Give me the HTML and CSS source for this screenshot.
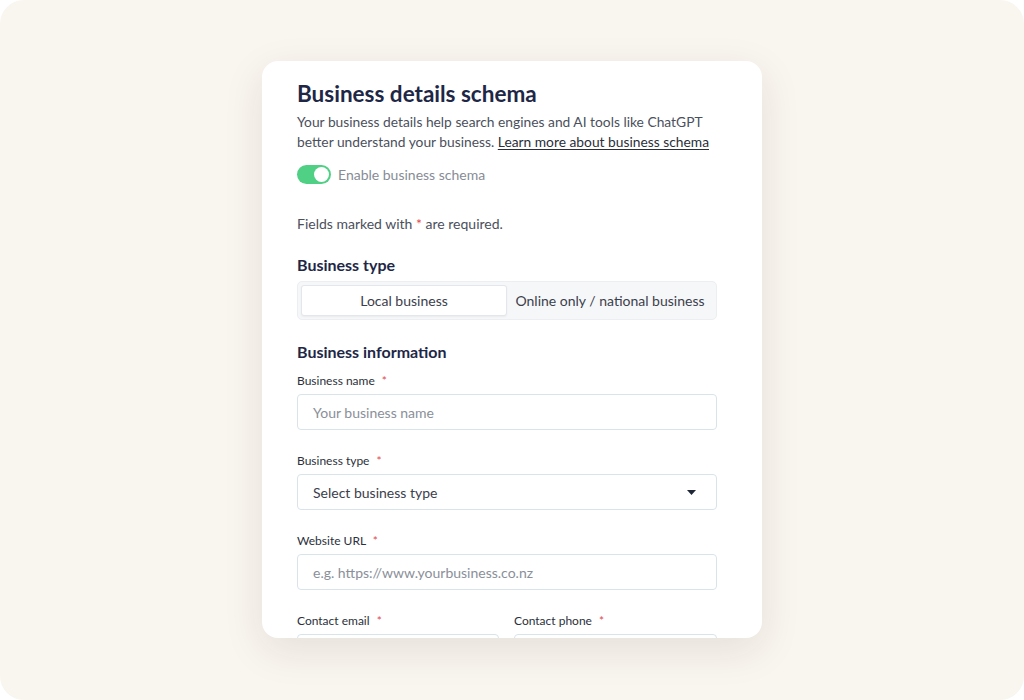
FILE: index.html
```html
<!DOCTYPE html>
<html lang="en">
<head>
<meta charset="utf-8">
<title>Business details schema</title>
<link rel="stylesheet" href="styles.css">
</head>
<body>
<div class="stage">
  <div class="card">
    <h1 class="title">Business details schema</h1>
    <p class="desc">Your business details help search engines and AI tools like ChatGPT better understand your business. <a href="#" class="link">Learn more about business schema</a></p>
    <label class="toggle-row">
      <span class="toggle"><span class="knob"></span></span>
      <span class="toggle-label">Enable business schema</span>
    </label>
    <p class="note">Fields marked with <span class="req">*</span> are required.</p>

    <h2 class="section">Business type</h2>
    <div class="segmented">
      <button class="seg active">Local business</button>
      <button class="seg">Online only / national business</button>
    </div>

    <h2 class="section section-info">Business information</h2>
    <div class="field">
      <div class="label">Business name <span class="req">*</span></div>
      <div class="input placeholder">Your business name</div>
    </div>
    <div class="field">
      <div class="label">Business type <span class="req">*</span></div>
      <div class="input select"><span>Select business type</span>
        <svg class="caret" width="9" height="5" viewBox="0 0 9 5"><path d="M0 0H9L4.5 5Z" fill="#1f2638"/></svg>
      </div>
    </div>
    <div class="field">
      <div class="label">Website URL <span class="req">*</span></div>
      <div class="input placeholder">e.g. https://www.yourbusiness.co.nz</div>
    </div>
    <div class="row">
      <div class="field">
        <div class="label">Contact email <span class="req">*</span></div>
        <div class="input"></div>
      </div>
      <div class="field">
        <div class="label">Contact phone <span class="req">*</span></div>
        <div class="input"></div>
      </div>
    </div>
  </div>
</div>
</body>
</html>
```

FILE: styles.css
```css
html, body {
  margin: 0;
  padding: 0;
  background: #ffffff;
}
body {
  font-family: Lato, "Noto Sans", sans-serif;
  color: #1f2740;
}
.stage {
  width: 1024px;
  height: 700px;
  background: #f9f5ef;
  border-radius: 24px;
  box-sizing: border-box;
  padding-top: 61px;
  display: flex;
  justify-content: center;
  align-items: flex-start;
  overflow: hidden;
}
.card {
  width: 500px;
  height: 577px;
  box-sizing: border-box;
  background: #ffffff;
  border-radius: 16px;
  box-shadow: 0 12px 40px rgba(60, 45, 30, 0.10);
  padding: 19px 45px 0 35px;
  overflow: hidden;
}
.title {
  margin: 0;
  font-size: 22.5px;
  line-height: 28px;
  font-weight: 700;
  color: #1e2746;
}
.desc {
  margin: 4px 0 0;
  font-size: 13.8px;
  line-height: 19.5px;
  color: #4b505c;
}
.link {
  color: #2a2f3a;
  text-decoration: underline;
  text-underline-offset: 2px;
}
.toggle-row {
  display: flex;
  align-items: center;
  gap: 7px;
  margin-top: 14px;
}
.toggle {
  width: 34px;
  height: 19px;
  border-radius: 10px;
  background: #4fd085;
  position: relative;
  display: inline-block;
}
.knob {
  position: absolute;
  right: 2px;
  top: 2px;
  width: 15px;
  height: 15px;
  border-radius: 50%;
  background: #ffffff;
}
.toggle-label {
  font-size: 14px;
  color: #878c96;
}
.note {
  margin: 30px 0 0;
  font-size: 14px;
  line-height: 20px;
  color: #4b505c;
}
.req {
  color: #e5484d;
}
.section {
  margin: 20px 0 0;
  font-size: 16px;
  line-height: 22px;
  font-weight: 700;
  color: #1e2746;
}
.segmented {
  margin-top: 5px;
  display: grid;
  grid-template-columns: 1fr 1fr;
  padding: 3px;
  background: #f6f7f8;
  border: 1px solid #eceef1;
  border-radius: 5px;
  height: 39px;
  box-sizing: border-box;
}
.seg {
  font-family: inherit;
  font-size: 14px;
  color: #3b404c;
  background: transparent;
  border: 1px solid transparent;
  border-radius: 3px;
  padding: 0;
}
.seg.active {
  background: #ffffff;
  border-color: #e3e6ea;
  box-shadow: 0 1px 2px rgba(0,0,0,0.05);
}
.section-info {
  margin-top: 21px;
}
.field {
  margin-top: 10px;
}
.field + .field, .row {
  margin-top: 23px;
}
.label {
  font-size: 12px;
  line-height: 16px;
  color: #2b303b;
  margin-bottom: 5px;
}
.label .req {
  margin-left: 4px;
}
.input {
  height: 36px;
  box-sizing: border-box;
  border: 1px solid #d9e3ea;
  border-radius: 4px;
  padding: 0 15px;
  display: flex;
  align-items: center;
  font-size: 14px;
  color: #3b404c;
}
.placeholder {
  color: #8a8f99;
}
.select {
  justify-content: space-between;
  padding-right: 20px;
}
.row {
  display: grid;
  grid-template-columns: 202px 203px;
  column-gap: 15px;
}
.row .field {
  margin-top: 0;
}
```
